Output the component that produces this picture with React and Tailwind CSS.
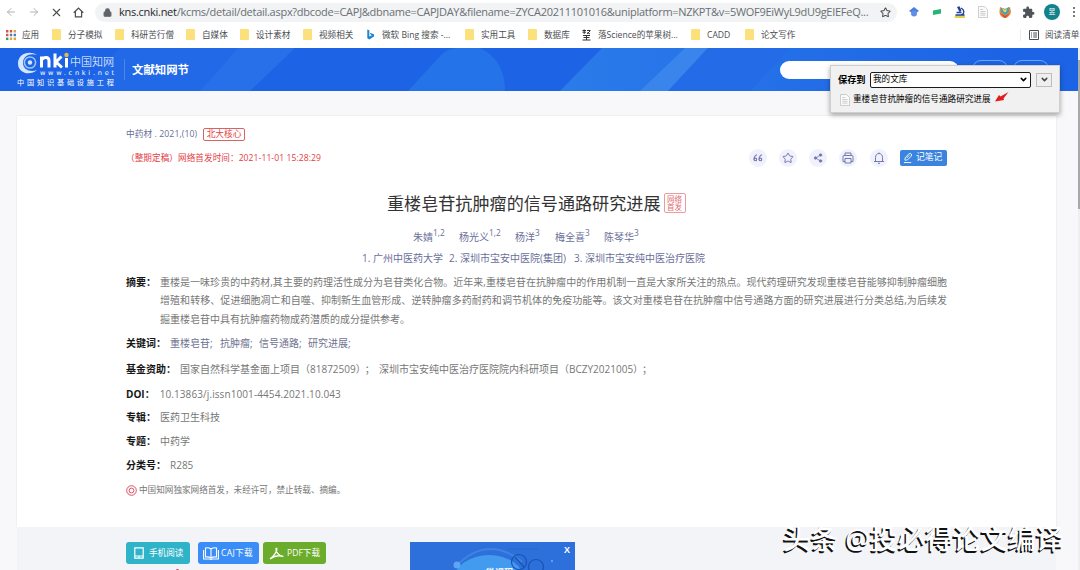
import React from "react";
import { ArrowLeft, ArrowRight, X, House, Star, Share2, Printer, Bell, Lock, ChevronDown } from "lucide-react";
import { MdExtension } from "react-icons/md";

const bookmarks = [
  { w: "w-[63px]", t: "分子模拟" },
  { w: "w-[71px]", t: "科研苦行僧" },
  { w: "w-[54px]", t: "自媒体" },
  { w: "w-[63px]", t: "设计素材" },
  { w: "w-[63px]", t: "视频相关" },
  { w: "w-[99px]", t: "微软 Bing 搜索 -...", k: "bing" },
  { w: "w-[63px]", t: "实用工具" },
  { w: "w-[54px]", t: "数据库" },
  { w: "w-[109px]", t: "落Science的苹果树...", k: "seal" },
  { w: "w-[54px]", t: "CADD" },
  { w: "w-[80px]", t: "论文写作" },
];

function BookmarkIcon({ kind }) {
  if (kind === "bing")
    return (
      <svg viewBox="0 0 9 12" className="h-[11px] w-[9px] shrink-0">
        <path d="M1 0.5L3.2 1.4V8.3L6 6.8L4.6 6L3.8 4L8.3 5.8V8.2L3.2 11.5L1 10.2Z" fill="#1c86cf" />
      </svg>
    );
  if (kind === "seal")
    return (
      <svg viewBox="0 0 9 12" className="h-3 w-[9px] shrink-0" stroke="#333" strokeWidth="1" fill="none">
        <path d="M0.5 1.5H4M2.2 0.5V5M0.5 3.2H4M5 1.5H8.5M5.5 3.5L8 5M8 2L5 5M1 6.5H8M4.5 6V11M1.5 8.5H7.5M0.5 11H8.5" />
      </svg>
    );
  return <span className="h-[11px] w-[9px] shrink-0 rounded-[1px] bg-[#fbe07c]" />;
}

function Toolbar() {
  return (
    <div className="relative flex h-6 items-center bg-white text-[#5f6368]">
      <ArrowLeft className="ml-[5px] size-3 shrink-0 text-[#b0b2b5]" strokeWidth={2} />
      <ArrowRight className="ml-[11px] size-3 shrink-0 text-[#b0b2b5]" strokeWidth={2} />
      <X className="ml-[10px] size-[13px] shrink-0 text-[#4a4d51]" strokeWidth={2} />
      <svg viewBox="0 0 12 12" className="ml-[10px] size-[11px] shrink-0" fill="none" stroke="#4a4d51" strokeWidth="1.3">
        <path d="M0.8 6.3L6 1.2L11.2 6.3M2.6 5V10.8H9.4V5" />
      </svg>
      <div className="ml-[11px] flex h-[19px] w-[802px] shrink-0 items-center rounded-full bg-[#f1f3f4] pl-[8px]">
        <Lock className="size-[9px] shrink-0 fill-[#5f6368]" strokeWidth={3} />
        <span className="ml-[7px] w-[753px] whitespace-nowrap text-[11px] tracking-[-0.275px] text-[#6b6f73]">
          <span className="text-[#26282b]">kns.cnki.net</span>
          /kcms/detail/detail.aspx?dbcode=CAPJ&amp;dbname=CAPJDAY&amp;filename=ZYCA20211101016&amp;uniplatform=NZKPT&amp;v=5WOF9EiWyL9dU9gEIEFeQ...
        </span>
        <Star className="ml-[8px] size-[11px] shrink-0 text-[#4a4d51]" strokeWidth={2.2} />
      </div>
      <svg viewBox="0 0 10 10" className="ml-[12px] size-[10px] shrink-0">
        <path d="M5 0L10 4L5 7L0 4Z" fill="#4b7fe0" />
        <circle cx="5" cy="6.5" r="3" fill="#628fe6" />
      </svg>
      <svg viewBox="0 0 8 6" className="ml-[14px] h-[6px] w-2 shrink-0">
        <path d="M0 1.5L8 0V4.5L0 6Z" fill="#22b573" />
      </svg>
      <svg viewBox="0 0 12 12" className="ml-[13px] size-3 shrink-0">
        <path d="M1 9.500H11V12H0.500Z" fill="#e4d04a" />
        <path d="M3 1L5.500 0.200L7.500 5L5.500 6Z" fill="#223f9a" />
        <path d="M7 2C11 4 10.500 8.500 7 8.800H3M1.500 9H10.500M2.500 6.500L7.500 6.500" fill="none" stroke="#223f9a" strokeWidth="1.3" />
      </svg>
      <PageIcon className="ml-[12px] h-3 w-[10px]" />
      <svg viewBox="0 0 12 12" className="ml-[11px] size-3 shrink-0">
        <path d="M1 1L6 3L11 1L12 6C11 10 8 12 6 12C3 12 0 9 0.5 5Z" fill="#e7873b" />
        <path d="M2 2L6 3L10 1V6L6 9L2 6Z" fill="#45a7b5" />
        <path d="M3 2L6 4L8 2L7 6H5Z" fill="#f5d558" />
        <path d="M1 7L6 10L11 7L6 12Z" fill="#c9473c" />
      </svg>
      <MdExtension className="ml-[11px] size-[13px] shrink-0 text-[#505357]" />
      <div className="ml-[9px] flex size-4 shrink-0 items-center justify-center rounded-full bg-[#12838c] text-[7px] text-white">昱</div>
      <div className="ml-[13px] flex shrink-0 flex-col gap-[2px]">
        <i className="size-[2px] rounded-full bg-[#4a4d51]" />
        <i className="size-[2px] rounded-full bg-[#4a4d51]" />
        <i className="size-[2px] rounded-full bg-[#4a4d51]" />
      </div>
    </div>
  );
}

function PageIcon({ className }) {
  return (
    <svg viewBox="0 0 10 12" className={"shrink-0 " + className} fill="#fafafa" stroke="#c3c3c3" strokeWidth="0.8">
      <path d="M0.5 0.5H6.5L9.5 3.5V11.5H0.5Z" />
      <path d="M2.3 3.5H5M2.3 5.5H7.5M2.3 7.3H7.5M2.3 9.1H7.5" />
    </svg>
  );
}

function Bookmarks() {
  return (
    <div className="relative flex h-6 items-center overflow-hidden whitespace-nowrap bg-white pb-[2px] pl-[6px] text-[8.6px] text-[#4a4d51]">
      <div className="flex w-[46px] shrink-0 items-center">
        <svg viewBox="0 0 10 10" className="mr-[6px] size-[10px] shrink-0">
          <path d="M0 0H2.4V2.4H0ZM3.8 0H6.2V2.4H3.8ZM0 3.8H2.4V6.2H0Z" fill="#dc5145" />
          <path d="M7.6 0H10V2.4H7.6ZM3.8 7.6H6.2V10H3.8ZM7.6 7.6H10V10H7.6Z" fill="#e2a33a" />
          <path d="M3.8 3.8H6.2V6.2H3.8ZM7.6 3.8H10V6.2H7.6Z" fill="#4b7bc9" />
          <path d="M0 7.6H2.4V10H0Z" fill="#3f9b5a" />
        </svg>
        应用
      </div>
      {bookmarks.map((b) => (
        <div key={b.t} className={"flex shrink-0 items-center gap-[7px] " + b.w}>
          <BookmarkIcon kind={b.k} />
          {b.t}
        </div>
      ))}
      <div className="ml-auto flex w-[60px] shrink-0 items-center gap-[6px] border-l border-[#ececec] pl-[8px]">
        <svg viewBox="0 0 10 10" className="size-[10px] shrink-0" fill="none" stroke="#4a4d51">
          <path d="M0.5 0.5H9.5V9.5H0.5ZM2 3H3M4.2 3H8M2 5H3M4.2 5H8M2 7H3M4.2 7H8" />
        </svg>
        阅读清单
      </div>
    </div>
  );
}

function Logo() {
  return (
    <svg viewBox="0 0 100 35" className="h-[35px] w-[100px] shrink-0" fill="#fff">
      <path d="M20 3C12-2 1 2 1 11.5C1 21 13 24.5 20 18C14 20.5 6 18 6 11C6 4 13 0.5 20 3Z" fill="#d4e6fb" />
      <circle cx="13" cy="10.5" r="5.6" fill="none" stroke="#9cc6f8" strokeWidth="1.5" />
      <circle cx="13" cy="10.5" r="2.2" fill="#d4e6fb" />
      <g fill="none" stroke="#fff" strokeWidth="3">
        <path d="M24.5 15.500V4.500M24.500 8C26.500 4.500 32 4.500 32 8.500V15.500M38 1.500V15.500M44.500 4.500L39 10L45 15.500M49.500 6V15.500" />
      </g>
      <circle cx="49.500" cy="3" r="2.200" fill="#e9b64f" />
      <text x="53" y="13.500" fontSize="11.500" textLength="44" lengthAdjust="spacingAndGlyphs" fontFamily="'Noto Sans CJK SC', sans-serif" fontWeight="300">中国知网</text>
      <text x="23" y="23" fontSize="6.600" textLength="74" fontFamily="'DejaVu Sans', sans-serif">www.cnki.net</text>
      <text x="0" y="33" fontSize="7.200" textLength="97" fontFamily="'Noto Sans CJK SC', sans-serif">中国知识基础设施工程</text>
    </svg>
  );
}

function Header() {
  return (
    <div className="relative flex h-[43px] items-center overflow-hidden bg-[#1c64e5]">
      <svg viewBox="0 0 1080 43" className="absolute inset-0 h-[43px] w-[1080px]">
        <defs>
          <linearGradient id="glow" x1="0" x2="1">
            <stop offset="0" stopColor="#2b7bea" />
            <stop offset="1" stopColor="#1c64e5" />
          </linearGradient>
        </defs>
        <path d="M120 0H295L245 43H80Z" fill="#2169e7" />
        <path d="M238 0H295L250 43H200Z" fill="#2770e9" />
        <path d="M408 43L442 6Q450 0 458 0H480Q505 12 505 43Z" fill="#2573e9" />
        <path d="M560 43L602 0H1000L955 43Z" fill="url(#glow)" />
        <path d="M640 43L685 0H708L668 43Z" fill="#3985ec" />
        <path d="M668 43L708 0H790L750 43Z" fill="#236be7" />
      </svg>
      <div className="relative flex flex-1 items-center">
        <div className="ml-[17px] flex"><Logo /></div>
        <div className="ml-[7px] h-[21px] w-px bg-[#4b86eb]" />
        <div className="ml-[7px] text-[11.4px] font-bold text-white">文献知网节</div>
        <div className="ml-auto h-[18px] w-[179px] rounded-full bg-white" />
        <div className="ml-[13px] mt-[-1px] h-[18px] w-[36px] rounded-full border border-[#6fa4f2]" />
        <div className="ml-[5px] mr-[31px] mt-[-1px] h-[18px] w-[36px] rounded-full border border-[#6fa4f2]" />
      </div>
    </div>
  );
}

function SavePopup() {
  return (
    <div className="absolute left-[830px] top-[65px] h-[48px] w-[230px] border border-[#cfcfcf] bg-[#f1f1f1] pl-[7px] pt-[5px] text-black shadow-[0_2px_5px_rgba(0,0,0,0.35)]">
      <div className="flex h-[17px] items-center">
        <span className="w-8 whitespace-nowrap text-[9.2px] font-bold">保存到</span>
        <div className="flex h-[16px] w-[161px] items-center justify-between rounded-[2px] border-[1.5px] border-[#1b1b1b] bg-white pl-[2px] pr-[2px] text-[8.6px]">
          我的文库
          <ChevronDown className="size-[9px]" strokeWidth={4} />
        </div>
        <div className="ml-[5px] flex h-[14px] w-[16px] items-center justify-center border border-[#bfbfbf] bg-[#efefef]">
          <ChevronDown className="size-[9px] text-[#444]" strokeWidth={4} />
        </div>
      </div>
      <div className="mt-[5px] flex h-[13px] items-center pl-[2px]">
        <PageIcon className="h-3 w-[10px]" />
        <span className="ml-[3px] w-[138px] whitespace-nowrap text-[8.6px]">重楼皂苷抗肿瘤的信号通路研究进展</span>
        <svg viewBox="0 0 14 10" className="mb-[6px] ml-[4px] h-[10px] w-[14px]" fill="#e01b1b">
          <path d="M0 9.5L4 3L5.5 4.5L13.5 0L8.5 6.5L9 8Z" />
        </svg>
      </div>
    </div>
  );
}

function Round({ children }) {
  return <div className="flex size-[18px] items-center justify-center rounded-full bg-[#f1f1fc] text-[#7478ae]">{children}</div>;
}

function Actions() {
  return (
    <div className="mr-[109px] flex items-center gap-[12.3px]">
      <Round>
        <svg viewBox="0 0 10 8" className="h-2 w-[10px]" fill="none" stroke="currentColor" strokeWidth="1.1">
          <path d="M4 0.8C2 1.5 1 3 1 5.5M9 0.8C7 1.5 6 3 6 5.5" />
          <circle cx="2.4" cy="5.4" r="1.3" /><circle cx="7.4" cy="5.4" r="1.3" />
        </svg>
      </Round>
      <Round><Star className="size-3" strokeWidth={2} /></Round>
      <Round><Share2 className="size-[10px] fill-current" strokeWidth={1.8} /></Round>
      <Round>
        <svg viewBox="0 0 12 12" className="size-3" fill="none" stroke="currentColor" strokeWidth="1">
          <path d="M3 3.500V1H9V3.500M3 9.500H1V4.500Q1 3.500 2 3.500H10Q11 3.500 11 4.500V9.500H9M3 6.500H9V11H3Z" />
        </svg>
      </Round>
      <Round>
        <svg viewBox="0 0 12 12" className="size-3" fill="none" stroke="currentColor" strokeWidth="1">
          <path d="M1 9.500H11M2.500 9.500V5.500C2.500 3 4 1.500 6 1.500S9.500 3 9.500 5.500V9.500M5 11.300H7M6 0.500V1.500" />
        </svg>
      </Round>
      <div className="flex h-4 w-[47px] items-center rounded-[2px] bg-[#3a84df] pl-[3px] text-[8.8px] text-white">
        <svg viewBox="0 0 11 12" className="mr-[3px] h-3 w-[10px]" fill="none" stroke="#fff">
          <path d="M2 8L2.5 5.5L6.5 1.5Q8 0.5 9 1.5T9 4L5 8L2 8.5M4 6L7 3M1 11H9" />
        </svg>
        <span className="whitespace-nowrap">记笔记</span>
      </div>
    </div>
  );
}

function Field({ label, children, h = "h-6", color = "text-[#777]" }) {
  return (
    <div className={"flex items-center whitespace-nowrap " + h}>
      <span className="font-bold text-[#151515]">{label}：</span>
      <span className={"ml-[4px] " + color}>{children}</span>
    </div>
  );
}

function Article() {
  return (
    <div className="ml-[17px] mt-[25px] h-[411px] w-[1039px] bg-white text-[10px] text-[#777] shadow-[0_0_2px_rgba(0,0,0,0.1)]">
      <div className="flex h-[37px] items-center pl-[109px] text-[8.7px] text-[#6a6f99]">
        <span className="w-[77px] whitespace-nowrap tracking-[0.07px]">中药材 . 2021,(10)</span>
        <span className="flex h-[13px] w-[42px] items-center justify-center whitespace-nowrap rounded-[2px] border border-[#d76565] text-[#e04545]">北大核心</span>
      </div>
      <div className="-mt-[3px] flex h-4 items-center justify-between">
        <span className="ml-[109px] whitespace-nowrap text-[8.6px] tracking-[0.07px] text-[#e43d45]">（整期定稿）网络首发时间：2021-11-01 15:28:29</span>
        <Actions />
      </div>
      <div className="mt-[25px] flex h-[26px] items-center pl-[370px]">
        <h1 className="whitespace-nowrap text-[17.1px] text-[#333]">重楼皂苷抗肿瘤的信号通路研究进展</h1>
        <div className="mb-[2px] ml-[3px] flex h-[20px] w-[22px] flex-col items-center justify-center rounded-[2px] border border-[#e99b9f] text-[7.5px] leading-[8px] text-[#e16b70]">
          <span>网络</span><span>首发</span>
        </div>
      </div>
      <div className="mt-[9px] flex h-[22px] items-center whitespace-nowrap pl-[396px] text-[#6a6f99] [&_sup]:text-[8.3px]">
        <span className="w-[46px]">朱婧<sup>1,2</sup></span>
        <span className="w-[56px]">杨光义<sup>1,2</sup></span>
        <span className="w-[40px]">杨洋<sup>3</sup></span>
        <span className="w-[49px]">梅全喜<sup>3</sup></span>
        <span>陈琴华<sup>3</sup></span>
      </div>
      <div className="flex h-5 items-center whitespace-nowrap pl-[345px] text-[#6a6f99]">
        <span className="w-[87px]">1. 广州中医药大学</span>
        <span className="w-[125px]">2. 深圳市宝安中医院(集团)</span>
        <span>3. 深圳市宝安纯中医治疗医院</span>
      </div>
      <div className="mt-[5px] flex pl-[109px]">
        <span className="w-[34px] shrink-0 whitespace-nowrap font-bold leading-[18.3px] text-[#151515]">摘要：</span>
        <div className="w-[787px] whitespace-nowrap leading-[18.3px]">
          <p className="[text-align-last:justify]">重楼是一味珍贵的中药材,其主要的药理活性成分为皂苷类化合物。近年来,重楼皂苷在抗肿瘤中的作用机制一直是大家所关注的热点。现代药理研究发现重楼皂苷能够抑制肿瘤细胞</p>
          <p className="[text-align-last:justify]">增殖和转移、促进细胞凋亡和自噬、抑制新生血管形成、逆转肿瘤多药耐药和调节机体的免疫功能等。该文对重楼皂苷在抗肿瘤中信号通路方面的研究进展进行分类总结,为后续发</p>
          <p>掘重楼皂苷中具有抗肿瘤药物成药潜质的成分提供参考。</p>
        </div>
      </div>
      <div className="mt-[3px] pl-[109px]">
        <Field label="关键词" h="h-[26px]" color="text-[#6f7391]">
          <span className="inline-block w-[50px]">重楼皂苷;</span>
          <span className="inline-block w-[39px]">抗肿瘤;</span>
          <span className="inline-block w-[49px]">信号通路;</span>
          研究进展;
        </Field>
        <Field label="基金资助" h="h-[26px]">
          <span className="inline-block w-[199px]">国家自然科学基金面上项目（81872509）<span className="ml-[4px]">；</span></span>
          深圳市宝安纯中医治疗医院院内科研项目（BCZY2021005）<span className="ml-[4px]">；</span>
        </Field>
        <Field label="DOI" h="h-[23px]"><span className="ml-px tracking-[0.09px]">10.13863/j.issn1001-4454.2021.10.043</span></Field>
        <Field label="专辑">医药卫生科技</Field>
        <Field label="专题">中药学</Field>
        <Field label="分类号">R285</Field>
        <div className="flex h-[26px] items-center gap-[2px] whitespace-nowrap text-[8.6px]">
          <svg viewBox="0 0 11 11" className="size-[11px]" fill="none" stroke="#dc4f63">
            <circle cx="5.5" cy="5.5" r="4.8" /><circle cx="5.5" cy="5.5" r="2.4" />
          </svg>
          中国知网独家网络首发，未经许可，禁止转载、摘编。
        </div>
      </div>
    </div>
  );
}

function Downloads() {
  return (
    <div className="ml-[17px] flex h-[43px] w-[1039px] items-start bg-[#f2f4f8] pl-[109px] pt-[15px] text-[8.6px] text-white">
      <div className="relative flex h-[22px] w-[64px] items-center rounded-[3px] bg-[#2fb3c9] pl-[8px]">
        <svg viewBox="0 0 10 12" className="mr-[5px] h-3 w-[10px]" fill="none" stroke="#fff" strokeWidth="1.2">
          <path d="M0.8 0.8H9.2V11.2H0.8ZM1 9H9M4.5 10H5.5" />
        </svg>
        手机阅读
        <span className="absolute left-[50px] top-[27px] h-[2px] w-[3px] rounded-t-full bg-[#d33]" />
      </div>
      <div className="ml-[8px] flex h-[22px] w-[61px] items-center whitespace-nowrap rounded-[3px] bg-[#3a8df6] pl-[5px] tracking-[0.3px]">
        <svg viewBox="0 0 16 13" className="mr-[2px] h-[13px] w-4" fill="none" stroke="#fff" strokeWidth="1.1">
          <path d="M8 2C6 0.5 4 0.5 2.5 1V10C5 9.5 6.5 10 8 11C9.500 10 11 9.500 13.500 10V1C12 0.500 10 0.500 8 2V11M0.600 3V12H6.500L8 12.500L9.500 12H15.400V3" />
        </svg>
        CAJ下载
      </div>
      <div className="ml-[4px] flex h-[22px] w-[63px] items-center whitespace-nowrap rounded-[3px] bg-[#6bac2b] pl-[6px]">
        <svg viewBox="0 0 15 13" className="mr-[3px] h-[13px] w-[15px]" fill="none" stroke="#fff" strokeWidth="1.3">
          <path d="M7.500 0.800C9 4 5 9 1 12M7 1C6.500 5 10 9 14.300 9.500C10 8 5 9 1 12" />
        </svg>
        PDF下载
      </div>
      <div className="relative ml-[84px] h-[28px] w-[165px] overflow-hidden bg-[#2d70db]">
        <svg viewBox="0 0 165 28" className="absolute inset-0 h-[28px] w-[165px]" fill="none">
          <ellipse cx="79" cy="38" rx="35" ry="25" fill="#439bf0" />
          <path d="M46 24Q78-8 112 20" stroke="#3e83e1" strokeWidth="2" />
          <circle cx="47" cy="23" r="3.500" fill="#5ca6f4" />
          <path d="M97 7H128" stroke="#2868c7" />
          <g stroke="#1754b4" strokeWidth="1.200">
            <circle cx="109" cy="20" r="7.500" /><circle cx="126" cy="25" r="7.500" /><path d="M105 15L114 25" />
          </g>
          <circle cx="142" cy="19" r="1" fill="#6eacf2" />
        </svg>
        <span className="absolute left-[76px] top-[25px] whitespace-nowrap text-[9px] font-bold leading-[12px]">微课程</span>
        <span className="absolute right-[5px] top-[1px] font-['Liberation_Sans'] text-[9px] font-bold leading-[15px]">X</span>
      </div>
    </div>
  );
}

export default function App() {
  return (
    <div className="relative h-[570px] w-[1080px] overflow-hidden bg-[#f8f8fa] font-['Open_Sans','Noto_Sans_CJK_SC',sans-serif]" lang="zh-CN">
      <Toolbar />
      <Bookmarks />
      <Header />
      <Article />
      <Downloads />
      <div className="absolute right-0 top-[48px] h-[522px] w-[2px] bg-[#eeeeef]">
        <div className="mt-[12px] h-[149px] w-[2px] bg-[#a9a9aa]" />
      </div>
      <SavePopup />
      <div className="absolute left-[783px] top-[518px] whitespace-nowrap text-[27.6px] font-medium leading-[40px] text-white [text-shadow:-1.5px_1.5px_0_#111]">头条 @投必得论文编译</div>
    </div>
  );
}
